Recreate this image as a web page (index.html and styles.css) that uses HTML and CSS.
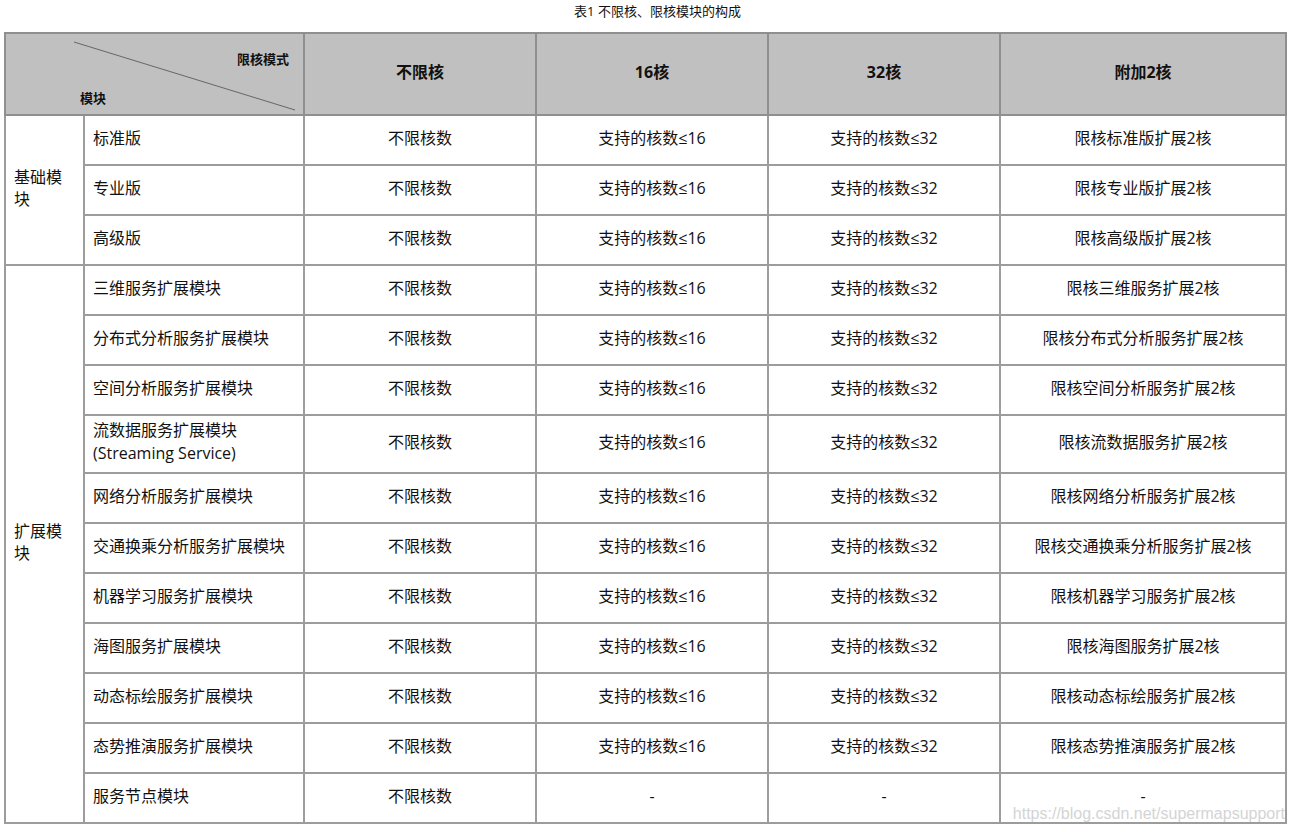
FILE: index.html
```html
<!DOCTYPE html>
<html lang="zh">
<head>
<meta charset="utf-8">
<title>表1 不限核、限核模块的构成</title>
<link rel="stylesheet" href="styles.css">
</head>
<body>
<div class="page">
  <div class="caption">表1 不限核、限核模块的构成</div>
  <table class="grid">
    <colgroup>
      <col class="c1"><col class="c2"><col class="c3"><col class="c4"><col class="c5"><col class="c6">
    </colgroup>
    <thead>
      <tr class="head">
        <th colspan="2" class="diag">
          <svg class="diag-line" width="299" height="82" viewBox="0 0 299 82"><line x1="68" y1="8" x2="289" y2="76" stroke="#666" stroke-width="1"/></svg>
          <span class="diag-top">限核模式</span>
          <span class="diag-bottom">模块</span>
        </th>
        <th>不限核</th>
        <th>16核</th>
        <th>32核</th>
        <th>附加2核</th>
      </tr>
    </thead>
    <tbody>
      <tr><td rowspan="3" class="group">基础模块</td><td class="name">标准版</td><td>不限核数</td><td>支持的核数≤16</td><td>支持的核数≤32</td><td>限核标准版扩展2核</td></tr>
      <tr><td class="name">专业版</td><td>不限核数</td><td>支持的核数≤16</td><td>支持的核数≤32</td><td>限核专业版扩展2核</td></tr>
      <tr><td class="name">高级版</td><td>不限核数</td><td>支持的核数≤16</td><td>支持的核数≤32</td><td>限核高级版扩展2核</td></tr>
      <tr><td rowspan="11" class="group">扩展模块</td><td class="name">三维服务扩展模块</td><td>不限核数</td><td>支持的核数≤16</td><td>支持的核数≤32</td><td>限核三维服务扩展2核</td></tr>
      <tr><td class="name">分布式分析服务扩展模块</td><td>不限核数</td><td>支持的核数≤16</td><td>支持的核数≤32</td><td>限核分布式分析服务扩展2核</td></tr>
      <tr><td class="name">空间分析服务扩展模块</td><td>不限核数</td><td>支持的核数≤16</td><td>支持的核数≤32</td><td>限核空间分析服务扩展2核</td></tr>
      <tr class="tall"><td class="name">流数据服务扩展模块<br>(Streaming Service)</td><td>不限核数</td><td>支持的核数≤16</td><td>支持的核数≤32</td><td>限核流数据服务扩展2核</td></tr>
      <tr><td class="name">网络分析服务扩展模块</td><td>不限核数</td><td>支持的核数≤16</td><td>支持的核数≤32</td><td>限核网络分析服务扩展2核</td></tr>
      <tr><td class="name">交通换乘分析服务扩展模块</td><td>不限核数</td><td>支持的核数≤16</td><td>支持的核数≤32</td><td>限核交通换乘分析服务扩展2核</td></tr>
      <tr><td class="name">机器学习服务扩展模块</td><td>不限核数</td><td>支持的核数≤16</td><td>支持的核数≤32</td><td>限核机器学习服务扩展2核</td></tr>
      <tr><td class="name">海图服务扩展模块</td><td>不限核数</td><td>支持的核数≤16</td><td>支持的核数≤32</td><td>限核海图服务扩展2核</td></tr>
      <tr><td class="name">动态标绘服务扩展模块</td><td>不限核数</td><td>支持的核数≤16</td><td>支持的核数≤32</td><td>限核动态标绘服务扩展2核</td></tr>
      <tr><td class="name">态势推演服务扩展模块</td><td>不限核数</td><td>支持的核数≤16</td><td>支持的核数≤32</td><td>限核态势推演服务扩展2核</td></tr>
      <tr><td class="name">服务节点模块</td><td>不限核数</td><td>-</td><td>-</td><td>-</td></tr>
    </tbody>
  </table>
  <div class="watermark">https://blog.csdn.net/supermapsupport</div>
</div>
</body>
</html>
```

FILE: styles.css
```css
html, body {
  margin: 0;
  padding: 0;
  background: #fff;
}

body {
  font-family: "Open Sans", "Noto Sans", "Noto Sans CJK SC", sans-serif;
  color: #111;
}

.page {
  position: relative;
  width: 1294px;
  padding: 0 9px 0 4px;
  box-sizing: border-box;
}

.caption {
  height: 32px;
  padding-top: 2px;
  box-sizing: border-box;
  text-align: center;
  font-size: 13px;
  line-height: 18px;
  padding-left: 26px;
}

.grid {
  width: 1281px;
  table-layout: fixed;
  border-collapse: collapse;
  border: 2px solid #8a8a8a;
  font-size: 16px;
}

.c1 { width: 79px; }
.c2 { width: 220px; }
.c3 { width: 232px; }
.c4 { width: 232px; }
.c5 { width: 232px; }
.c6 { width: 286px; }

.grid th,
.grid td {
  border: 2px solid #9c9c9c;
  padding: 0 8px;
  text-align: center;
  vertical-align: middle;
  line-height: 23px;
  height: 50px;
  box-sizing: border-box;
}

.grid td {
  padding-bottom: 4px;
}

.head th {
  background: #c0c0c0;
  height: 82px;
  font-weight: bold;
  font-size: 16px;
  padding-top: 0;
  padding-bottom: 4px;
  border-color: #8f8f8f;
}

.diag {
  position: relative;
}

.diag-line {
  position: absolute;
  left: 0;
  top: 0;
}

.diag-top {
  position: absolute;
  left: 231px;
  top: 16px;
  font-size: 13px;
  line-height: 18px;
}

.diag-bottom {
  position: absolute;
  left: 74px;
  top: 55px;
  font-size: 13px;
  line-height: 18px;
}

.grid td.name,
.grid td.group {
  text-align: left;
}

.grid td.group {
  padding-left: 8px;
  padding-right: 8px;
  line-height: 22px;
}

.tall td {
  height: 58px;
}

.watermark {
  position: absolute;
  right: 9px;
  top: 804px;
  font-family: "Liberation Sans", Arial, sans-serif;
  font-size: 16px;
  line-height: 20px;
  color: #d4d4d4;
  pointer-events: none;
}
```
